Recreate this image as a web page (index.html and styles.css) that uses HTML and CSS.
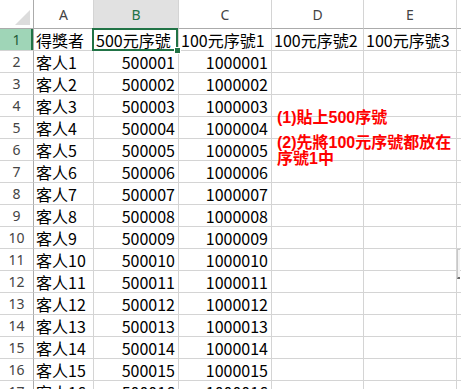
FILE: index.html
```html
<!DOCTYPE html>
<html lang="zh-Hant">
<head>
    <meta charset="UTF-8">
    <title>序號表</title>
    <link rel="stylesheet" href="styles.css">
</head>
<body>
    <div class="sheet" id="sheet">
        <div class="corner">
            <svg width="15" height="15" viewBox="0 0 15 15"><polygon points="15,0 15,15 0,15" fill="#dcdcdc"/></svg>
        </div>
        <div class="col-head">A</div>
        <div class="col-head selected">B</div>
        <div class="col-head">C</div>
        <div class="col-head">D</div>
        <div class="col-head">E</div>
        <div class="col-head"></div>

        <div class="row-head selected">1</div>
        <div class="cell">得獎者</div>
        <div class="cell active">500元序號</div>
        <div class="cell">100元序號1</div>
        <div class="cell">100元序號2</div>
        <div class="cell">100元序號3</div>
        <div class="cell"></div>
    </div>

    <div class="note">
        <p>(1)貼上500序號</p>
        <p>(2)先將100元序號都放在<br>序號1中</p>
    </div>

    <div class="shape-edge"></div>

    <script>
        const sheet = document.getElementById('sheet');

        // Rows 2..17: guest name, 500 serial, 100 serial
        for (let r = 2; r <= 17; r++) {
            const n = r - 1;
            const values = [
                ['row-head', r],
                ['cell', '客人' + n],
                ['cell num', 500000 + n],
                ['cell num', 1000000 + n],
                ['cell', ''],
                ['cell', ''],
                ['cell', '']
            ];
            values.forEach(([cls, text]) => {
                const div = document.createElement('div');
                div.className = cls;
                div.textContent = text;
                sheet.appendChild(div);
            });
        }
    </script>
</body>
</html>
```

FILE: styles.css
```css
body {
    margin: 0;
    background: #fff;
    overflow: hidden;
    font-family: "Noto Sans CJK TC", sans-serif;
}

.sheet {
    display: grid;
    grid-template-columns: 34px 60px 85px 93px 92px 93px 1fr;
    grid-template-rows: 29px;
    grid-auto-rows: 22px;
    height: 389px;
    overflow: hidden;
}

.corner,
.col-head,
.row-head,
.cell {
    box-sizing: border-box;
    border-right: 1px solid #d4d4d4;
    border-bottom: 1px solid #d4d4d4;
}

.corner {
    display: flex;
    justify-content: flex-end;
    align-items: flex-end;
    padding: 0 3px 3px 0;
    border-right-color: #ababab;
    border-bottom-color: #ababab;
}

.col-head {
    display: flex;
    justify-content: center;
    align-items: center;
    font-family: "Noto Sans", sans-serif;
    font-size: 14px;
    color: #444;
    border-bottom-color: #ababab;
}

.col-head.selected {
    background: #e1e1e1;
    color: #217346;
}

.row-head {
    display: flex;
    justify-content: center;
    align-items: center;
    font-family: "Noto Sans", sans-serif;
    font-size: 14px;
    color: #444;
    border-right-color: #ababab;
}

.row-head.selected {
    background: #9fd5b7;
    color: #1d5b38;
    box-shadow: inset -2px 0 0 #217346;
}

.cell {
    display: flex;
    align-items: center;
    padding: 0 2px;
    font-size: 16px;
    line-height: 20px;
    color: #000;
    white-space: nowrap;
}

.cell.num {
    justify-content: flex-end;
    padding-right: 3px;
}

.cell.active {
    position: relative;
    z-index: 2;
}

.cell.active::after {
    content: "";
    position: absolute;
    top: -1px;
    left: -2px;
    right: 0;
    bottom: -1px;
    border: 2px solid #217346;
}

.cell.active::before {
    content: "";
    position: absolute;
    right: -3px;
    bottom: -4px;
    width: 5px;
    height: 5px;
    background: #217346;
    border: 1px solid #fff;
    z-index: 3;
}

.note {
    position: absolute;
    left: 277px;
    top: 110px;
    color: #f00;
    font-family: "Liberation Sans", "Noto Sans CJK TC", sans-serif;
    font-weight: bold;
    font-size: 16px;
    line-height: 16px;
}

.note p {
    margin: 0 0 9px;
}

.shape-edge {
    position: absolute;
    left: 457px;
    top: 249px;
    width: 2px;
    height: 27px;
    border: 1px solid #c8c8c8;
    border-right: none;
    border-bottom: 2px solid #6a6a6a;
    background: #f4f4f4;
}
```
